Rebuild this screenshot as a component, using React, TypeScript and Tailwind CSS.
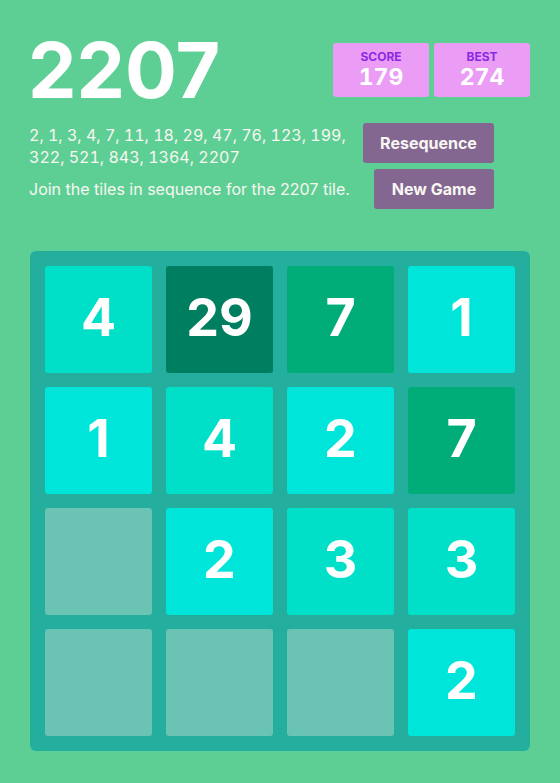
import React from 'react';

type Cell = number | null;

const GRID: Cell[][] = [
  [4, 29, 7, 1],
  [1, 4, 2, 7],
  [null, 2, 3, 3],
  [null, null, null, 2],
];

const tileClass = (v: Cell) => {
  switch (v) {
    case null:
      return 'bg-[#6ac3b3]';
    case 1:
    case 2:
      return 'bg-[#00e5da]';
    case 3:
    case 4:
      return 'bg-[#00e0c9]';
    case 7:
      return 'bg-[#00ad78]';
    default:
      return 'bg-[#007f60]';
  }
};

const ScoreBox = ({ label, value }: { label: string; value: number }) => (
  <div className="w-[96px] h-[54px] bg-[#eb9df6] rounded-[3px] flex flex-col items-center pt-[7px]">
    <span className="text-[12px] leading-[14px] font-bold text-[#8a2be2]">{label}</span>
    <span className="text-[23px] leading-[26px] font-bold text-white tabular-nums">{value}</span>
  </div>
);

export default function App() {
  return (
    <div
      className="min-h-[783px] w-full bg-[#5ecf94] text-white"
      style={{ fontFamily: 'Inter, "Open Sans", sans-serif' }}
    >
      <div className="w-[500px] mx-auto pt-[26px]">
        {/* Header */}
        <div className="flex items-start justify-between">
          <h1 className="text-[77px] leading-[88px] font-bold -ml-[2px]">2207</h1>
          <div className="flex gap-[5px] mt-[17px]">
            <ScoreBox label="SCORE" value={179} />
            <ScoreBox label="BEST" value={274} />
          </div>
        </div>

        {/* Intro */}
        <div className="flex justify-between mt-[9px]">
          <div className="text-[16px] leading-[22px] text-[#f9f6f2] pt-[1px] -ml-[1px]">
            <p className="w-[330px] tabular-nums">
              2, 1, 3, 4, 7, 11, 18, 29, 47, 76, 123, 199, 322, 521, 843, 1364, 2207
            </p>
            <p className="mt-[10px]">Join the tiles in sequence for the 2207 tile.</p>
          </div>
          <div className="flex flex-col items-end gap-[6px] mr-[36px]">
            <button className="w-[131px] h-[40px] bg-[#836791] rounded-[3px] text-[16px] font-bold text-[#f9f6f2]">
              Resequence
            </button>
            <button className="w-[120px] h-[40px] bg-[#836791] rounded-[3px] text-[16px] font-bold text-[#f9f6f2]">
              New Game
            </button>
          </div>
        </div>

        {/* Board */}
        <div className="mt-[42px] bg-[#24ae9e] rounded-[6px] p-[15px] grid grid-cols-4 gap-[14px]">
          {GRID.flat().map((v, i) => (
            <div
              key={i}
              className={`h-[107px] rounded-[3px] flex items-center justify-center text-[52px] font-bold text-white pb-[4px] ${tileClass(v)}`}
            >
              {v ?? ''}
            </div>
          ))}
        </div>
      </div>
    </div>
  );
}
